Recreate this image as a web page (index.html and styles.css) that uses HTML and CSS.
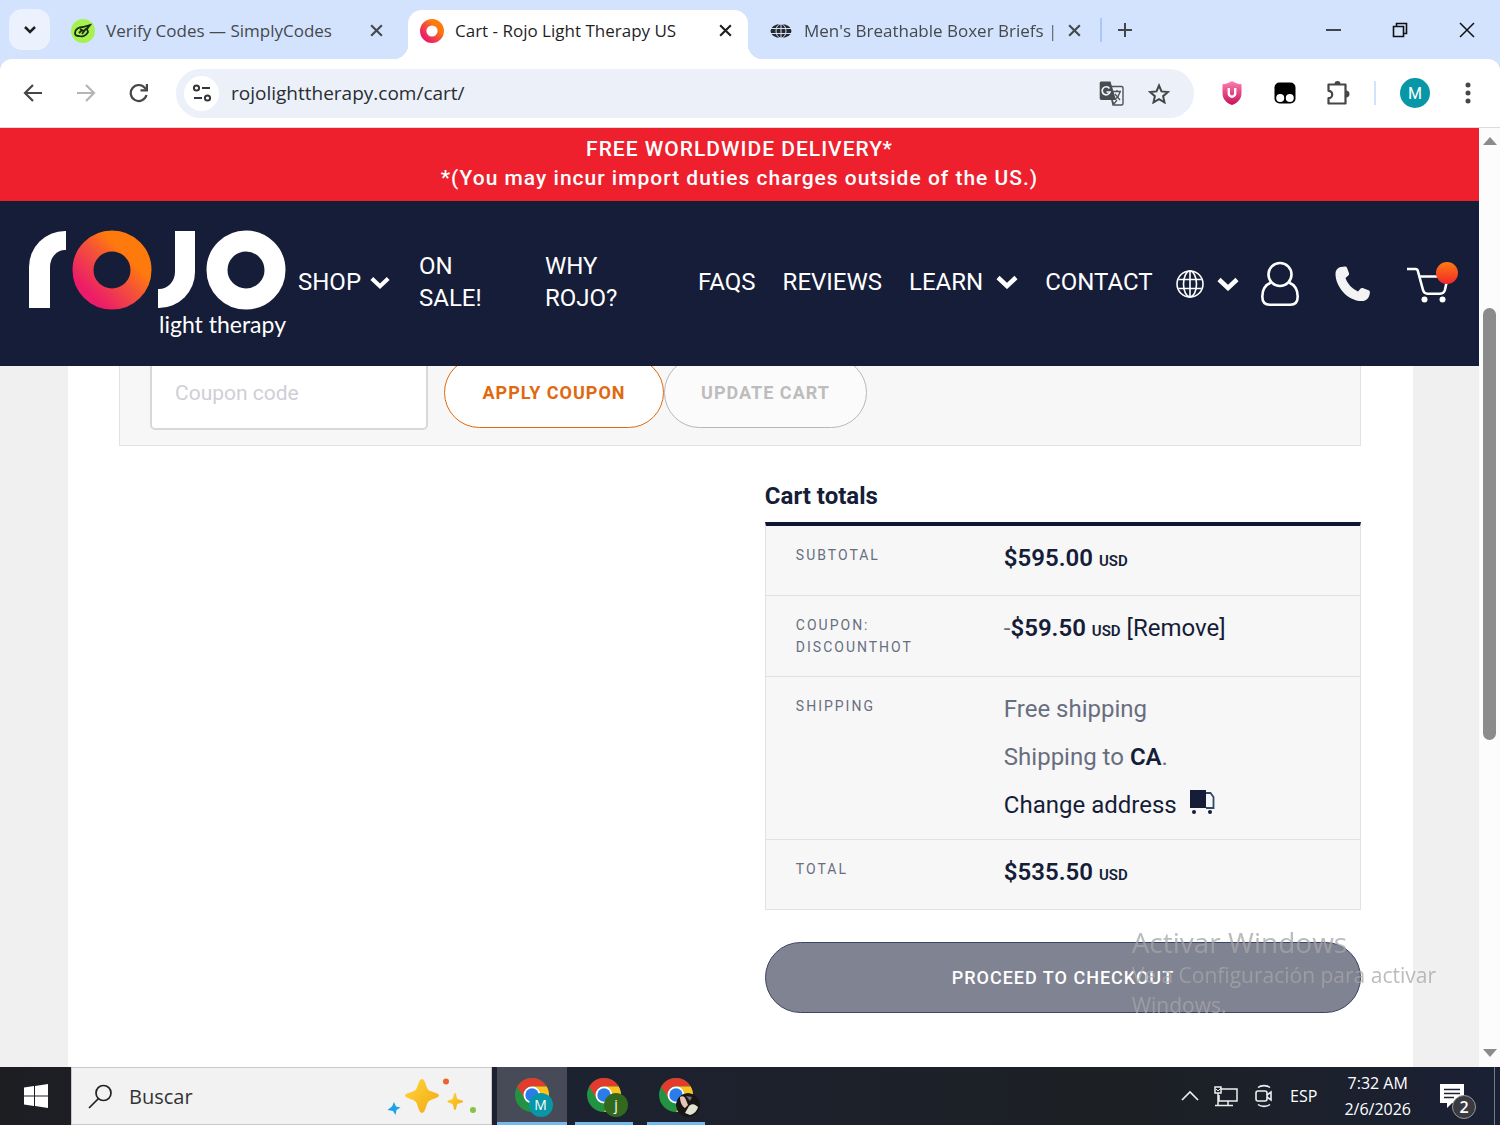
FILE: index.html
```html
<!DOCTYPE html>
<html lang="en">
<head>
    <meta charset="UTF-8" />
    <meta name="viewport" content="width=device-width, initial-scale=1" />
    <title>Cart - Rojo Light Therapy US</title>
    <link rel="stylesheet" href="styles.css">
</head>
<body>

<!-- shared symbols -->
<svg class="symbols" width="0" height="0" aria-hidden="true">
    <defs>
        <linearGradient id="rojoGrad" x1="0" y1="1" x2="1" y2="0">
            <stop offset="0.1" stop-color="#ec1c68" />
            <stop offset="0.5" stop-color="#f4513a" />
            <stop offset="0.75" stop-color="#ff7a0c" />
        </linearGradient>
        <linearGradient id="shieldGrad" x1="0" y1="0" x2="0" y2="1">
            <stop offset="0" stop-color="#ff7fb0" />
            <stop offset="1" stop-color="#c8105c" />
        </linearGradient>
        <linearGradient id="starGrad" x1="0" y1="0" x2="1" y2="1">
            <stop offset="0" stop-color="#ffd83a" />
            <stop offset="1" stop-color="#f3a712" />
        </linearGradient>
    </defs>
    <symbol id="close" viewBox="0 0 14 14">
        <path d="M2 2l10 10M12 2L2 12" stroke="currentColor" stroke-width="2" fill="none" />
    </symbol>
    <symbol id="chevron" viewBox="0 0 22 14">
        <path d="M2 2.500l9 8.500 9-8.500" stroke="currentColor" stroke-width="4.500" fill="none" />
    </symbol>
    <symbol id="chrome" viewBox="0 0 36 36">
        <circle cx="18" cy="18" r="17" fill="#229342" />
        <path d="M3.300 9.500a17 17 0 0 1 29.400 0H18a8.500 8.500 0 0 0-7.400 12.800z" fill="#e33b2e" />
        <path d="M32.700 9.500A17 17 0 0 1 18 35l7.400-12.800a8.500 8.500 0 0 0 0-8.500L18 9.500z" fill="#fcc31e" />
        <circle cx="18" cy="18" r="8.500" fill="#fff" />
        <circle cx="18" cy="18" r="6.700" fill="#2a7de9" />
    </symbol>
</svg>

<header class="tab-strip">
    <button class="tab-search" aria-label="Search tabs">
        <svg width="14" height="10" viewBox="0 0 14 10"><path d="M2 2l5 5 5-5" stroke="#1f1f1f" stroke-width="2.500" fill="none" /></svg>
    </button>
    <div class="tab">
        <svg class="favicon" viewBox="0 0 24 24">
            <circle cx="12" cy="12" r="12" fill="#a5f24f" />
            <path d="M4 14c0-4 4-6 8-6l7-2-3 4 1 3c-2 4-6 5-9 4-2 0-4-1-4-3zM8 14l3-3M11 15l3-4M9 10l4 2 3-3" stroke="#1d2b14" stroke-width="1.800" fill="none" />
        </svg>
        <span class="tab-title">Verify Codes — SimplyCodes</span>
        <button class="tab-close" aria-label="Close tab"><svg width="15" height="15"><use href="#close" /></svg></button>
    </div>
    <div class="tab active">
        <svg class="favicon" viewBox="0 0 24 24"><circle cx="12" cy="12" r="8.800" fill="none" stroke="url(#rojoGrad)" stroke-width="6.400" /></svg>
        <span class="tab-title">Cart - Rojo Light Therapy US</span>
        <button class="tab-close" aria-label="Close tab"><svg width="15" height="15"><use href="#close" /></svg></button>
    </div>
    <div class="tab">
        <svg class="favicon" viewBox="0 0 24 24">
            <ellipse cx="12" cy="12" rx="10.500" ry="7" fill="#25282d" />
            <path d="M1 9.500h22M1 14.500h22M12 5v14" stroke="#d3e3fd" stroke-width="1" />
            <ellipse cx="12" cy="12" rx="5" ry="7" fill="none" stroke="#d3e3fd" stroke-width="1" />
        </svg>
        <span class="tab-title fade">Men's Breathable Boxer Briefs |</span>
        <button class="tab-close" aria-label="Close tab"><svg width="15" height="15"><use href="#close" /></svg></button>
    </div>
    <button class="new-tab" aria-label="New tab">
        <svg width="16" height="16" viewBox="0 0 16 16"><path d="M8 1v14M1 8h14" stroke="#444746" stroke-width="2" /></svg>
    </button>
    <div class="window-controls">
        <button aria-label="Minimize"><svg width="16" height="16" viewBox="0 0 16 16"><path d="M1 8h15" stroke="#111" stroke-width="1.500" /></svg></button>
        <button aria-label="Restore"><svg width="16" height="16" viewBox="0 0 16 16"><path d="M1.500 4.500h10v10h-10zM4.500 4V1.500h10v10H12" stroke="#111" stroke-width="1.600" fill="none" /></svg></button>
        <button aria-label="Close"><svg width="16" height="16" viewBox="0 0 16 16"><path d="M1 1l14 14M15 1L1 15" stroke="#111" stroke-width="1.500" /></svg></button>
    </div>
</header>

<div class="toolbar-wrap">
<div class="toolbar">
    <button aria-label="Back"><svg width="20" height="20" viewBox="0 0 20 20"><path d="M19 10H2M10 2l-8 8 8 8" stroke="#444746" stroke-width="2.200" fill="none" /></svg></button>
    <button aria-label="Forward"><svg width="20" height="20" viewBox="0 0 20 20"><path d="M1 10h17M10 2l8 8-8 8" stroke="#b3b5b8" stroke-width="2.200" fill="none" /></svg></button>
    <button aria-label="Reload"><svg width="20" height="20" viewBox="0 0 20 20"><path d="M17.500 12A8 8 0 1 1 16 5l2 2" stroke="#444746" stroke-width="2.200" fill="none" /><path d="M19 1v7.500h-7.500V6.300h5.300V1z" fill="#444746" /></svg></button>
    <div class="omnibox">
        <button class="site-info" aria-label="Site information">
            <svg width="20" height="18" viewBox="0 0 20 18"><g fill="none" stroke="#333639" stroke-width="2"><circle cx="4.500" cy="4" r="2.600" /><path d="M10 4h8M2 14h8" /><circle cx="15.500" cy="14" r="2.600" /></g></svg>
        </button>
        <input class="url" type="text" aria-label="Address" value="rojolighttherapy.com/cart/" />
        <button aria-label="Translate this page">
            <svg width="25" height="25" viewBox="0 0 25 25">
                <path d="M10 5.500h12.500a1.500 1.500 0 0 1 1.500 1.500v15.500a1.500 1.500 0 0 1-1.500 1.500H14z" fill="#eef3fa" stroke="#50545a" stroke-width="1.400" />
                <path d="M2 .5h9.500l5.500 18.500H2.500A1.800 1.800 0 0 1 .7 17V2A1.500 1.500 0 0 1 2 .5z" fill="#484b50" />
                <path d="M10.500 7.500A4 4 0 1 0 11 11H7.500" stroke="#eef3fa" stroke-width="1.700" fill="none" />
                <path d="M14 10.500h8M18 9v1.500M21 11c-1 4-3 6-5 7.500M16 13l5 6M13 19l2 4 3-4" stroke="#50545a" stroke-width="1.300" fill="none" />
            </svg>
        </button>
        <button aria-label="Bookmark this tab">
            <svg width="22" height="21" viewBox="0 0 22 21"><path d="M11 2.500l2.500 5.900 6.400.6-4.800 4.200 1.400 6.200-5.500-3.300-5.500 3.300 1.400-6.200L2.100 9l6.400-.6z" stroke="#444746" stroke-width="2" fill="none" /></svg>
        </button>
    </div>
    <div class="extensions">
        <button aria-label="Shield extension">
            <svg width="20" height="24" viewBox="0 0 20 24"><path d="M10 0c3 2 6 3 9.500 3.300V12c0 6-4 10-9.500 12C4.500 22 .5 18 .5 12V3.300C4 3 7 2 10 0z" fill="url(#shieldGrad)" /><path d="M6.800 7v5.500a3.200 3.200 0 0 0 6.400 0V7" stroke="#fff" stroke-width="2.400" fill="none" /></svg>
        </button>
        <button aria-label="Script manager">
            <svg width="22" height="22" viewBox="0 0 22 22"><rect x=".5" y=".5" width="21" height="21" rx="5" fill="#000" /><circle cx="6.200" cy="16" r="4" fill="#fff" /><circle cx="15.800" cy="16" r="4" fill="#fff" /></svg>
        </button>
        <button aria-label="Extensions">
            <svg width="26" height="26" viewBox="0 0 26 26"><path d="M3.500 4.500h17v19h-17v-5.300a3.600 3.600 0 0 0 0-7.400z" stroke="#444746" stroke-width="2.200" fill="none" stroke-linejoin="round" /><path d="M9.500 4a3 3 0 0 1 6 0zM21 10.500a3.500 3.500 0 0 1 0 7z" fill="#444746" /></svg>
        </button>
    </div>
    <button class="avatar" aria-label="Profile">M</button>
    <button aria-label="Menu"><svg width="6" height="22" viewBox="0 0 6 22"><g fill="#444746"><circle cx="3" cy="3" r="2.500" /><circle cx="3" cy="11" r="2.500" /><circle cx="3" cy="19" r="2.500" /></g></svg></button>
</div>
</div>

<div class="viewport">
    <div class="site">
        <p class="banner">FREE WORLDWIDE DELIVERY*<br>*(You may incur import duties charges outside of the US.)</p>

        <nav class="site-nav">
            <a class="logo" href="#" aria-label="rojo light therapy">
                <span class="logo-word">
                    <span class="logo-r"></span>
                    <svg width="80" height="80" viewBox="0 0 80 80"><circle cx="40" cy="40" r="29" fill="none" stroke="url(#rojoGrad)" stroke-width="21" /></svg>
                    <span class="logo-j"></span>
                    <svg class="logo-last" width="80" height="80" viewBox="0 0 80 80"><circle cx="40" cy="40" r="29" fill="none" stroke="#fff" stroke-width="21" /></svg>
                </span>
                <span class="logo-sub">light therapy</span>
            </a>
            <ul class="menu">
                <li><a href="#">SHOP <svg width="20" height="13"><use href="#chevron" /></svg></a></li>
                <li class="sale"><a href="#">ON SALE!</a></li>
                <li class="why"><a href="#">WHY ROJO?</a></li>
                <li><a href="#">FAQS</a></li>
                <li><a href="#">REVIEWS</a></li>
                <li><a class="wide" href="#">LEARN <svg width="22" height="14"><use href="#chevron" /></svg></a></li>
                <li><a href="#">CONTACT</a></li>
            </ul>
            <div class="nav-icons">
                <button class="region" aria-label="Choose region">
                    <svg width="28" height="28" viewBox="0 0 28 28"><g fill="none" stroke="#fff" stroke-width="1.600"><circle cx="14" cy="14" r="13" /><ellipse cx="14" cy="14" rx="6.500" ry="13" /><path d="M14 1v26M2.500 9.500h23M2.500 18.500h23" /></g></svg>
                    <svg width="22" height="14"><use href="#chevron" /></svg>
                </button>
                <a href="#" aria-label="My account">
                    <svg width="40" height="46" viewBox="0 0 40 46"><g fill="none" stroke="#fff" stroke-width="2.600"><circle cx="20" cy="13.500" r="11.500" /><path d="M11 21.500C5 24 2.300 29 2.300 35.500c0 5.500 2.500 8.200 7.500 8.200h20.400c5 0 7.500-2.700 7.500-8.200 0-6.500-2.700-11.500-8.700-14" /></g></svg>
                </a>
                <a href="#" aria-label="Call us">
                    <svg width="36" height="36" viewBox="0 0 36 36"><path d="M6 1l4-.6c1 0 1.600.5 2 1.400l2 5.500c.3 1 0 1.700-.7 2.300L10.500 12c2 6 6.500 10.500 12.500 13.500l2.400-2.800c.6-.7 1.400-.9 2.300-.6l5.800 2.200c1 .4 1.600 1.200 1.400 2.200-.3 5-3.500 8.600-8 8.600C12 35 .5 20 .5 8 .5 4 2.800 1.800 6 1z" fill="#f3f3f3" /></svg>
                </a>
                <a class="cart" href="#" aria-label="Cart">
                    <svg width="52" height="40" viewBox="0 0 52 40"><path d="M1 5h8.500c1.200 0 2 .6 2.300 1.800L17 26c.7 2.600 2 3.700 4.500 3.700h12.500c2.700 0 4.200-1.200 4.900-3.700l3-13.500H14" fill="none" stroke="#fff" stroke-width="2.600" /><circle cx="18.500" cy="35.500" r="3" fill="#fff" /><circle cx="36.500" cy="35.500" r="3" fill="#fff" /></svg>
                    <span class="cart-dot"></span>
                </a>
            </div>
        </nav>

        <main class="content">
            <form class="coupon-bar">
                <input type="text" placeholder="Coupon code" aria-label="Coupon code" />
                <button type="button" class="btn btn-apply">APPLY COUPON</button>
                <button type="button" class="btn btn-update" disabled>UPDATE CART</button>
            </form>

            <section class="totals">
                <h2>Cart totals</h2>
                <table>
                    <tr>
                        <th scope="row">SUBTOTAL</th>
                        <td><b>$595.00 <small>USD</small></b></td>
                    </tr>
                    <tr>
                        <th scope="row">COUPON: DISCOUNTHOT</th>
                        <td>-<b>$59.50 <small>USD</small></b> <a href="#">[Remove]</a></td>
                    </tr>
                    <tr>
                        <th scope="row">SHIPPING</th>
                        <td class="shipping">
                            <p>Free shipping</p>
                            <p>Shipping to <b>CA</b>.</p>
                            <p><a href="#">Change address
                                <svg width="26" height="26" viewBox="0 0 26 26"><path d="M1 1h16v18H1z" fill="#151d38" /><path d="M17 4h4.500l3 4v11H17" fill="none" stroke="#2d4a68" stroke-width="1.800" /><circle cx="5" cy="23" r="2" fill="#151d38" /><circle cx="21" cy="23" r="2" fill="#151d38" /></svg></a></p>
                        </td>
                    </tr>
                    <tr>
                        <th scope="row">TOTAL</th>
                        <td><b>$535.50 <small>USD</small></b></td>
                    </tr>
                </table>
                <button type="button" class="btn btn-checkout">PROCEED TO CHECKOUT</button>
            </section>
        </main>
    </div>

    <div class="scrollbar">
        <svg width="14" height="8" viewBox="0 0 14 8"><path d="M0 8l7-8 7 8z" fill="#8b8b8b" /></svg>
        <div class="thumb"></div>
        <svg width="14" height="8" viewBox="0 0 14 8"><path d="M0 0h14L7 8z" fill="#8b8b8b" /></svg>
    </div>
</div>

<footer class="taskbar">
    <button class="start" aria-label="Start">
        <svg width="24" height="24" viewBox="0 0 24 24"><path d="M0 3.400l10-1.400v9.400H0zM11 1.900L24 0v11.400H11zM0 12.600h10V22L0 20.600zM11 12.600h13V24l-13-1.900z" fill="#fff" /></svg>
    </button>
    <label class="search">
        <svg width="25" height="25" viewBox="0 0 25 25"><circle cx="15.500" cy="9" r="7.500" fill="none" stroke="#222" stroke-width="1.700" /><path d="M10.500 14.500L1 24" stroke="#222" stroke-width="1.700" /></svg>
        <input type="text" placeholder="Buscar" aria-label="Buscar" />
        <svg class="sparkles" width="90" height="38" viewBox="0 0 90 38">
            <path d="M35 2c3.500 0 4 9 6.500 11S52 16 52 18.500 44 22 41.500 24.500 38.500 36 35 36s-4-9-6.500-11.500S18 21 18 18.500 26 15.500 28.500 13 31.500 2 35 2z" fill="url(#starGrad)" />
            <path d="M68 16c1.500 0 1.500 5 2.500 6s5.500 1 5.500 2.500-4.500 1.500-5.500 2.500-1 6-2.500 6-1.500-5-2.500-6-5-1-5-2.500 4-1.500 5-2.500 1-6 2.500-6z" fill="url(#starGrad)" />
            <path d="M7 25l2 4.500 4.500 1-4 2.500-1 5-2.500-4-5.500-1L5 29.500z" fill="#1da1e8" />
            <circle cx="59" cy="4.500" r="3" fill="#ea6431" />
            <circle cx="86" cy="33" r="3" fill="#86c440" />
        </svg>
    </label>
    <div class="apps">
        <button class="app current" aria-label="Chrome, profile M">
            <svg width="36" height="36"><use href="#chrome" /></svg>
            <span class="profile teal">M</span>
        </button>
        <button class="app" aria-label="Chrome, profile j">
            <svg width="36" height="36"><use href="#chrome" /></svg>
            <span class="profile green">j</span>
        </button>
        <button class="app" aria-label="Chrome, third profile">
            <svg width="36" height="36"><use href="#chrome" /></svg>
            <svg class="profile" viewBox="0 0 24 24"><circle cx="12" cy="12" r="12" fill="#191516" /><path d="M4 4c3-2 5 0 6 3l2 5-3 3c-3-2-5-6-5-11z" fill="#e5c4b5" /><path d="M13 13c3-3 6-2 9 1-1 4-4 7-8 8l-5-2z" fill="#dfe3cf" /><path d="M10 3l6 1-2 4z" fill="#fff" opacity=".4" /></svg>
        </button>
    </div>
    <div class="tray">
        <svg width="18" height="12" viewBox="0 0 18 12"><path d="M1 10l8-8 8 8" stroke="#eee" stroke-width="1.700" fill="none" /></svg>
        <svg width="24" height="21" viewBox="0 0 24 21"><g fill="none" stroke="#eee" stroke-width="1.500"><path d="M7 3h16v12H5V9M14 15v4M9 19.500h10M1 1h6v6H1zM4 7v12.500M1 19.500h8" /></g><path d="M2 3l2 2 3-3" stroke="#eee" fill="none" /></svg>
        <svg width="18" height="24" viewBox="0 0 18 24"><g fill="none" stroke="#eee" stroke-width="1.600"><rect x="1" y="7" width="11" height="10" rx="2" /><path d="M12 11l4-3v8l-4-3M3 3.500c3-2.500 9-2.500 12 0M3 20.500c3 2.500 9 2.500 12 0" /></g></svg>
        <span>ESP</span>
        <time class="clock">7:32 AM<br>2/6/2026</time>
        <div class="notifications">
            <svg width="24" height="25" viewBox="0 0 24 25"><path d="M0 0h24v19H12l-5 5v-5H0z" fill="#fff" /><path d="M4 5.500h16M4 9.500h16M4 13.500h10" stroke="#1d2233" stroke-width="1.500" /></svg>
            <span class="count">2</span>
        </div>
        <span class="show-desktop"></span>
    </div>
</footer>

<aside class="watermark">
    <strong>Activar Windows</strong>
    Ve a Configuración para activar<br>Windows.
</aside>

</body>
</html>
```
FILE: styles.css
```css
:root {
    --navy: #151d38;
    --red: #ee202e;
    --orange: #e0690f;
    --strip: #d3e3fd;
    --line: #e2e2e4;
    --muted: #686e80;
    --ui: "Open Sans", "Noto Sans", sans-serif;
}
* {
    box-sizing: border-box;
}
body {
    margin: 0;
    height: 100vh;
    display: flex;
    flex-direction: column;
    overflow: hidden;
    font-family: Roboto, sans-serif;
    color: var(--navy);
    background: #fff;
}
.symbols {
    position: absolute;
}
svg {
    flex: none;
    display: block;
}
button {
    padding: 0;
    border: 0;
    background: none;
    font-family: inherit;
    display: flex;
    align-items: center;
    justify-content: center;
}
input {
    border: 0;
    outline: 0;
    background: none;
    font-family: inherit;
}
a {
    color: inherit;
    text-decoration: none;
}

/* browser tabs */
.tab-strip {
    flex: none;
    height: 59px;
    padding-left: 9px;
    display: flex;
    align-items: center;
    gap: 9px;
    background: var(--strip);
    font-family: var(--ui);
}
.tab-search {
    width: 41px;
    height: 41px;
    border-radius: 13px;
    background: #ebf1fd;
}
.tab {
    flex: 0 1 340px;
    min-width: 0;
    height: 49px;
    margin-top: 10px;
    padding: 0 12px 8px;
    display: flex;
    align-items: center;
    gap: 11px;
    color: #45494d;
}
.tab.active {
    position: relative;
    background: #fff;
    border-radius: 14px 14px 0 0;
    color: #1f1f1f;
}
/* the flared feet of the active tab */
.tab.active::before,
.tab.active::after {
    content: "";
    position: absolute;
    bottom: 0;
    width: 14px;
    height: 14px;
}
.tab.active::before {
    right: 100%;
    background: radial-gradient(circle at 0 0, transparent 14px, #fff 14px);
}
.tab.active::after {
    left: 100%;
    background: radial-gradient(circle at 100% 0, transparent 14px, #fff 14px);
}
.favicon {
    width: 24px;
    height: 24px;
}
.tab-title {
    flex: 1;
    font-size: 17px;
    white-space: nowrap;
}
.tab-title.fade {
    -webkit-mask-image: linear-gradient(to right, #000 94%, #0006);
    mask-image: linear-gradient(to right, #000 94%, #0006);
    margin-right: -11px;
}
.tab-close {
    width: 22px;
    height: 22px;
    color: inherit;
}
.new-tab {
    width: 48px;
    height: 24px;
    margin-left: -6px;
    border-left: 2px solid #a8c7fa;
}
.window-controls {
    display: flex;
    margin-left: auto;
}
.window-controls button {
    width: 67px;
    height: 59px;
}

/* browser toolbar */
.toolbar-wrap {
    flex: none;
    background: var(--strip);
}
.toolbar {
    height: 69px;
    padding: 0 6px;
    display: flex;
    align-items: center;
    background: #fff;
    border-radius: 12px 12px 0 0;
    border-bottom: 1px solid #dcdcdc;
}
.toolbar button {
    width: 53px;
    height: 40px;
}
.omnibox {
    flex: 1;
    height: 49px;
    margin: 0 11px;
    padding: 0 12px 0 8px;
    display: flex;
    align-items: center;
    border-radius: 25px;
    background: #ebf0f9;
}
.omnibox button {
    width: 47px;
}
.omnibox .site-info {
    width: 35px;
    height: 35px;
    border-radius: 50%;
    background: #fff;
}
.url {
    flex: 1;
    padding: 0 0 0 12px;
    font-family: var(--ui);
    font-size: 19px;
    color: #2a2d31;
}
.extensions {
    display: flex;
    padding-right: 12px;
    margin-right: 24px;
    position: relative;
}
.extensions::after {
    content: "";
    position: absolute;
    right: 0;
    top: 8px;
    width: 2px;
    height: 24px;
    background: #d3e3fd;
}
.toolbar .avatar {
    width: 30px;
    height: 30px;
    margin-right: 11px;
    border-radius: 50%;
    background: #0797a7;
    color: #fff;
    font-size: 16px;
}

/* page area */
.viewport {
    flex: 1;
    min-height: 0;
    display: flex;
}
.site {
    flex: 1;
    min-width: 0;
    display: flex;
    flex-direction: column;
    overflow: hidden;
    background: #f0f0f0;
}
.banner {
    flex: none;
    margin: 0;
    padding: 7px 0 8px;
    background: var(--red);
    color: #fff;
    text-align: center;
    font-size: 21px;
    font-weight: 500;
    line-height: 29px;
    letter-spacing: 1px;
    position: relative;
    z-index: 1;
}
.site-nav {
    flex: none;
    height: 165px;
    padding: 0 21px 0 29px;
    display: flex;
    align-items: center;
    background: var(--navy);
    color: #fff;
    position: relative;
    z-index: 1;
}
.logo {
    flex: none;
    width: 257px;
}
.logo-word {
    display: flex;
    align-items: center;
}
.logo-r {
    width: 37px;
    height: 77px;
    margin-right: 6px;
    border-left: 21px solid #fff;
    border-top: 19px solid #fff;
    border-top-left-radius: 36px;
}
.logo-j {
    width: 37px;
    height: 77px;
    margin-left: 6px;
    border-right: 20px solid #fff;
    border-bottom: 19px solid #fff;
    border-bottom-right-radius: 36px;
}
.logo-last {
    margin-left: auto;
}
.logo-sub {
    display: block;
    text-align: right;
    font-family: Lato, sans-serif;
    font-size: 23px;
    line-height: 28px;
}
.menu {
    flex: 1;
    margin: 0 0 0 12px;
    padding: 0 0 3px;
    display: flex;
    align-items: center;
    gap: 27px;
    list-style: none;
    font-size: 24px;
    line-height: 32px;
}
.menu a {
    display: flex;
    align-items: center;
    gap: 9px;
}
.menu a.wide {
    gap: 13px;
}
.menu .sale {
    width: 99px;
    margin-left: 2px;
}
.menu .why {
    width: 126px;
}
.menu .sale a,
.menu .why a {
    width: 80px;
}
.nav-icons {
    display: flex;
    align-items: center;
}
.nav-icons .region {
    gap: 13px;
    margin-right: 21px;
    color: #fff;
}
.nav-icons a {
    margin-right: 35px;
}
.nav-icons .cart {
    position: relative;
    margin-right: 0;
}
.cart-dot {
    position: absolute;
    right: 0;
    top: -2px;
    width: 22px;
    height: 22px;
    border-radius: 50%;
    background: linear-gradient(#ff7a10, #f0282c);
}

/* cart; the first rows are scrolled under the navigation */
.content {
    flex: 1;
    margin: -32px 66px 0 68px;
    padding: 0 52px 0 51px;
    background: #fff;
}
.coupon-bar {
    height: 112px;
    padding: 5px 30px 0;
    display: flex;
    align-items: center;
    border: 1px solid var(--line);
    background: #f7f7f7;
}
.coupon-bar input {
    width: 278px;
    height: 74px;
    margin-right: 16px;
    padding: 0 23px;
    border: 2px solid #d8d8dc;
    border-radius: 5px;
    background: #fff;
    font-size: 21px;
    color: var(--navy);
}
.coupon-bar input::placeholder {
    color: #d0ced6;
}
.btn {
    height: 71px;
    border-radius: 36px;
    font-size: 18px;
    font-weight: 500;
    letter-spacing: 1px;
}
.btn-apply {
    width: 220px;
    border: 1px solid var(--orange);
    background: #fff;
    color: var(--orange);
    font-weight: 700;
}
.btn-update {
    width: 203px;
    border: 1px solid #b8b8b8;
    background: #fbfbfb;
    color: #bdbdbd;
    font-weight: 700;
}
.totals {
    width: 48%;
    margin: 34px 0 0 auto;
}
.totals h2 {
    margin: 0 0 10px;
    font-size: 24px;
    line-height: 32px;
    font-weight: 700;
}
.totals table {
    width: 100%;
    border-collapse: separate;
    border-spacing: 0;
    border: 1px solid var(--line);
    border-top: 4px solid #0c1734;
    background: #f7f7f7;
}
.totals th,
.totals td {
    height: 69px;
    padding: 16px 0 18px;
    border-bottom: 1px solid var(--line);
    vertical-align: top;
    text-align: left;
    font-weight: 400;
}
.totals tr:last-child > * {
    border-bottom: 0;
}
.totals th {
    width: 238px;
    padding: 18px 60px 18px 30px;
    font-size: 14px;
    line-height: 22px;
    letter-spacing: 2px;
    color: var(--muted);
}
.totals td {
    font-size: 24px;
    line-height: 32px;
    color: var(--muted);
}
.totals td b,
.totals td a {
    color: var(--navy);
}
.totals td b {
    font-weight: 600;
}
.totals small {
    font-size: 15px;
}
.totals .shipping p {
    margin: 0 0 16px;
}
.totals .shipping p:last-child {
    margin: 0;
}
.totals .shipping a {
    display: flex;
    gap: 12px;
}
.btn-checkout {
    width: 100%;
    margin-top: 32px;
    border: 1px solid #3e4463;
    background: #808391;
    color: #fff;
}

.scrollbar {
    width: 21px;
    padding: 9px 0 10px;
    display: flex;
    flex-direction: column;
    align-items: center;
    background: #fcfcfc;
}
.thumb {
    width: 13px;
    height: 47%;
    margin: 163px 0 auto;
    border-radius: 7px;
    background: #8b8b8b;
}

/* windows taskbar */
.taskbar {
    flex: none;
    height: 58px;
    display: flex;
    background: linear-gradient(to right, #1d1e22, #1d2233 30%, #1c2024 75%, #1b2135);
    color: #fff;
    font-family: var(--ui);
}
.start {
    width: 71px;
}
.search {
    width: 421px;
    padding: 0 14px 0 16px;
    display: flex;
    align-items: center;
    border: 1px solid #c8c8c8;
    background: #f2f2f2;
}
.search input {
    flex: 1;
    min-width: 0;
    padding: 0 0 0 16px;
    font-size: 20px;
}
.search input::placeholder {
    color: #333;
}
.apps {
    display: flex;
    gap: 14px;
    margin-left: 5px;
}
.app {
    width: 58px;
    position: relative;
    color: #fff;
    border-bottom: 3px solid #76b9ed;
}
.app.current {
    width: 70px;
    margin-right: -6px;
    background: #474b58;
}
.profile {
    position: absolute;
    left: 50%;
    top: 26px;
    width: 24px;
    height: 24px;
    border-radius: 50%;
    font-size: 14px;
    line-height: 24px;
}
.app.current .profile {
    left: 45%;
}
.profile.teal {
    background: #0797a7;
}
.profile.green {
    background: #33691e;
}
.tray {
    margin-left: auto;
    display: flex;
    align-items: center;
    font-size: 16px;
}
.tray > * {
    margin-right: 17px;
}
.tray > svg:first-child {
    margin-right: 15px;
}
.tray .clock {
    margin: 0 29px 0 10px;
    text-align: center;
    line-height: 26px;
}
.tray .notifications {
    position: relative;
    margin-right: 30px;
}
.count {
    position: absolute;
    left: 12px;
    top: 11px;
    width: 24px;
    height: 24px;
    border: 1px solid #999;
    border-radius: 50%;
    background: #3a3b40;
    text-align: center;
    font-weight: 600;
    line-height: 22px;
}
.tray .show-desktop {
    width: 1px;
    height: 58px;
    margin-right: 5px;
    background: #777b85;
}

/* activation notice lies over everything */
.watermark {
    position: fixed;
    right: 64px;
    bottom: 105px;
    font-family: var(--ui);
    font-size: 21px;
    line-height: 30px;
    color: rgba(165, 165, 168, 0.75);
    pointer-events: none;
}
.watermark strong {
    display: block;
    font-size: 28px;
    line-height: 36px;
    font-weight: 400;
}
```
